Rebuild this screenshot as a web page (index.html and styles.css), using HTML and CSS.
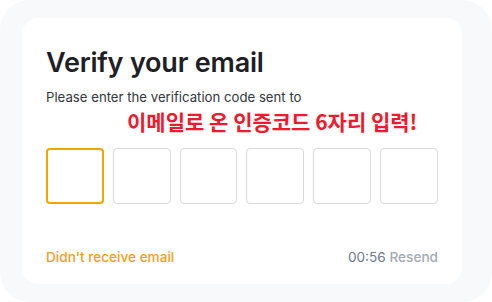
FILE: index.html
```html
<!DOCTYPE html>
<html>
<head>
<meta charset="utf-8">
<link rel="stylesheet" href="styles.css">
</head>
<body>
<div class="panel">
  <div class="card">
    <h1 class="title">Verify your email</h1>
    <p class="subtitle">Please enter the verification code sent to</p>
    <p class="note">이메일로 온 인증코드 6자리 입력!</p>
    <div class="code">
      <div class="digit active"></div>
      <div class="digit"></div>
      <div class="digit"></div>
      <div class="digit"></div>
      <div class="digit"></div>
      <div class="digit"></div>
    </div>
    <div class="footer">
      <span class="help">Didn't receive email</span>
      <span class="timer">00:56 <span class="resend">Resend</span></span>
    </div>
  </div>
</div>
</body>
</html>
```
FILE: styles.css
```css
html, body {
  margin: 0;
  padding: 0;
  background: #ffffff;
}
body {
  width: 492px;
  height: 302px;
  overflow: hidden;
  font-family: Inter, "Noto Sans", sans-serif;
}
.panel {
  box-sizing: border-box;
  width: 492px;
  height: 302px;
  background: #f8f9fb;
  border-radius: 30px;
  padding: 18px 30px 18px 22px;
}
.card {
  box-sizing: border-box;
  height: 266px;
  background: #ffffff;
  border-radius: 16px;
  padding: 29px 24px 0 24px;
  display: flex;
  flex-direction: column;
}
.title {
  margin: 0;
  font-size: 27px;
  line-height: 32px;
  font-weight: 600;
  color: #1e2026;
  letter-spacing: -0.2px;
}
.subtitle {
  margin: 10px 0 0 0;
  font-size: 13.2px;
  line-height: 16px;
  color: #32363d;
}
.note {
  margin: 3px 0 0 81px;
  font-family: "Noto Sans CJK KR", sans-serif;
  font-size: 21px;
  line-height: 26px;
  font-weight: 700;
  color: #f2192c;
}
.code {
  margin-top: 14px;
  display: grid;
  grid-template-columns: repeat(6, 1fr);
  gap: 9px;
  width: 392px;
}
.digit {
  box-sizing: border-box;
  height: 56px;
  border: 1px solid #dadada;
  border-radius: 4px;
}
.digit.active {
  border: 2px solid #f0a500;
}
.footer {
  margin-top: 45px;
  width: 392px;
  display: flex;
  justify-content: space-between;
  align-items: baseline;
  font-size: 13.6px;
  line-height: 16px;
  font-weight: 500;
}
.help {
  color: #f39c1f;
}
.timer {
  color: #707a8a;
  font-weight: 400;
}
.resend {
  color: #a3aab5;
  font-weight: 500;
}
```
